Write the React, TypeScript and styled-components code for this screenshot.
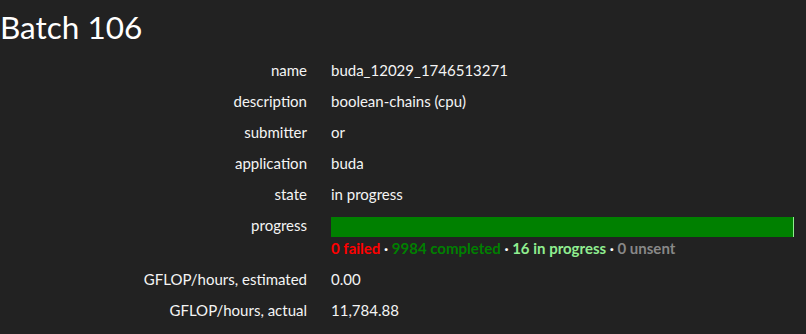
import React from 'react';
import styled, { createGlobalStyle } from 'styled-components';

const GlobalStyle = createGlobalStyle`
  html, body {
    margin: 0;
    padding: 0;
    background: #222222;
  }
  body {
    font-family: Lato, "Open Sans", sans-serif;
    font-size: 15px;
    line-height: 22px;
    color: #ffffff;
  }
`;

const Page = styled.div`
  width: 806px;
`;

const Title = styled.h1`
  margin: 7px 0 0 0;
  font-size: 31.5px;
  font-weight: 400;
  line-height: 40px;
  color: #ffffff;
`;

const Table = styled.div`
  display: grid;
  grid-template-columns: 319px 1fr;
  margin-top: 8px;
`;

const Label = styled.div`
  text-align: right;
  padding: 4px 12px 5px;
  color: #f4f4f4;
`;

const Value = styled.div`
  padding: 4px 12px 5px;
  color: #f4f4f4;
`;

const Bar = styled.div`
  display: flex;
  height: 20px;
  margin-top: 3px;
  background: #222;
`;

const Segment = styled.div<{ $color: string }>`
  height: 100%;
  background: ${(p) => p.$color};
`;

const Counts = styled.div`
  font-weight: 700;
`;

const Count = styled.span<{ $color: string }>`
  color: ${(p) => p.$color};
`;

const Dot = styled.span`
  color: #ffffff;
  font-weight: 700;
`;

const rows: [string, string][] = [
  ['name', 'buda_12029_1746513271'],
  ['description', 'boolean-chains (cpu)'],
  ['submitter', 'or'],
  ['application', 'buda'],
  ['state', 'in progress'],
];

const done = 9984;
const running = 16;
const total = 10000;

export default function App() {
  return (
    <Page>
      <GlobalStyle />
      <Title>Batch 106</Title>
      <Table>
        {rows.map(([k, v]) => (
          <React.Fragment key={k}>
            <Label>{k}</Label>
            <Value>{v}</Value>
          </React.Fragment>
        ))}
        <Label>progress</Label>
        <Value>
          <Bar>
            <Segment $color="#008000" style={{ width: `${(done / total) * 100}%` }} />
            <Segment $color="#90ee90" style={{ width: `${(running / total) * 100}%` }} />
          </Bar>
          <Counts>
            <Count $color="#ff0000">0 failed</Count>
            <Dot> · </Dot>
            <Count $color="#008000">9984 completed</Count>
            <Dot> · </Dot>
            <Count $color="#90ee90">16 in progress</Count>
            <Dot> · </Dot>
            <Count $color="#888888">0 unsent</Count>
          </Counts>
        </Value>
        <Label>GFLOP/hours, estimated</Label>
        <Value>0.00</Value>
        <Label>GFLOP/hours, actual</Label>
        <Value>11,784.88</Value>
      </Table>
    </Page>
  );
}
